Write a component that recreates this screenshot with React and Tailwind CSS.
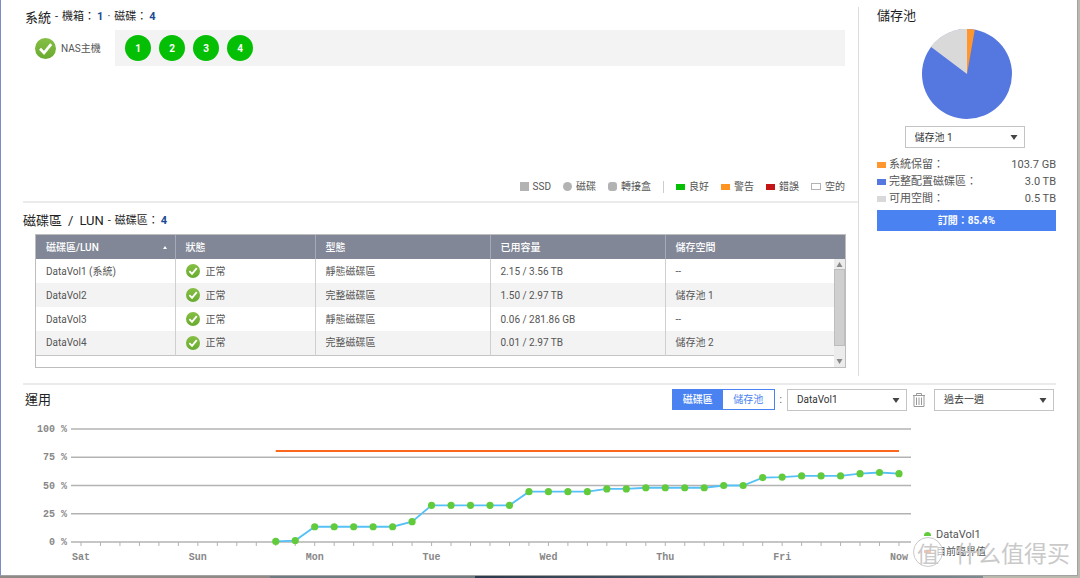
import { Fragment } from 'react'
import clsx from 'clsx'

const volumes = [
  { name: 'DataVol1 (系統)', type: '靜態磁碟區', used: '2.15 / 3.56 TB', pool: '--' },
  { name: 'DataVol2', type: '完整磁碟區', used: '1.50 / 2.97 TB', pool: '儲存池 1' },
  { name: 'DataVol3', type: '靜態磁碟區', used: '0.06 / 281.86 GB', pool: '--' },
  { name: 'DataVol4', type: '完整磁碟區', used: '0.01 / 2.97 TB', pool: '儲存池 2' },
]

const poolUsage = [
  { label: '系統保留', value: '103.7 GB', color: 'bg-[#ff962e]' },
  { label: '完整配置磁碟區', value: '3.0 TB', color: 'bg-[#5577e0]' },
  { label: '可用空間', value: '0.5 TB', color: 'bg-[#d9d9d9]' },
]

const days = ['Sat', 'Sun', 'Mon', 'Tue', 'Wed', 'Thu', 'Fri', 'Now']

// Usage in percent, one sample every four hours
const firstSample = 10
const usage = [
  0.5, 1.3, 13.5, 13.5, 13.5, 13.5, 13.5, 18, 32.5, 32.5, 32.5, 32.5, 32.5, 44.5, 44.5, 44.5, 44.5,
  47, 47, 48, 48, 48, 48, 50, 50, 57, 57.5, 58.5, 58.5, 58.5, 60.5, 61.5, 60.5,
]

function StatusIcon({ className }) {
  return (
    <svg viewBox="0 0 20 20" className={className} aria-hidden="true">
      <defs>
        <linearGradient id="ok" x1="0" y1="0" x2="0" y2="1">
          <stop offset="0" stopColor="#86bf45" />
          <stop offset="1" stopColor="#68ab2e" />
        </linearGradient>
      </defs>
      <circle cx="10" cy="10" r="10" fill="url(#ok)" />
      <path d="M4.8 10.2 L8.6 14.2 L15.4 5.8" fill="none" stroke="#fff" strokeWidth="2.6" />
    </svg>
  )
}

function TrashIcon() {
  return (
    <svg viewBox="0 0 14 16" className="h-4 w-3.5" fill="none" stroke="#999" aria-hidden="true">
      <path d="M1 3.5h12M4.5 3V1.5h5V3M2 3.5v11h10v-11M4.5 5.5v7.5M7 5.5v7.5M9.5 5.5v7.5" />
    </svg>
  )
}

function Dropdown({ label, value }) {
  return (
    <div className="relative w-[120px]">
      <select
        aria-label={label}
        defaultValue={value}
        className="block h-[22px] w-full appearance-none border border-[#c4c4c4] bg-white pl-[9px] text-[10px] text-[#333]"
      >
        <option>{value}</option>
      </select>
      <svg viewBox="0 0 8 5" className="pointer-events-none absolute top-[9px] right-[7px] h-[5px] w-2" aria-hidden="true">
        <path d="M0.5 0h7L4 5z" fill="#444" />
      </svg>
    </div>
  )
}

function Count({ label, value }) {
  return (
    <span className="flex items-center gap-0.5">
      {label}：<b className="text-[#1b4a94]">{value}</b>
    </span>
  )
}

function LegendItem({ marker, children }) {
  return (
    <li className="flex items-center gap-1">
      <span className={marker} />
      {children}
    </li>
  )
}

function SystemSection() {
  return (
    <section className="h-[203px] border-b-2 border-[#ebebeb] pr-[13px]">
      <div className="flex h-full flex-col">
        <h2 className="flex h-[30px] items-center gap-1 pt-[5px] pl-0.5 text-[13px] text-[#222]">
          系統
          <span className="flex gap-1 text-[11px]">
            <span>-</span>
            <Count label="機箱" value="1" />
            <span>·</span>
            <Count label="磁碟" value="4" />
          </span>
        </h2>
        <div className="flex items-center">
          <div className="flex w-[92px] items-center gap-[5px] pl-3 text-[10px]">
            <StatusIcon className="size-[21px]" />
            NAS主機
          </div>
          <div className="flex h-9 flex-1 items-center gap-2 bg-[#f3f3f3] px-[10px]">
            {[1, 2, 3, 4].map((disk) => (
              <button
                key={disk}
                type="button"
                className="size-[26px] rounded-full bg-[#04bf04] text-[10px] font-bold text-white"
              >
                {disk}
              </button>
            ))}
          </div>
        </div>
        <ul className="mt-auto flex items-center justify-end gap-3 pb-[7px] text-[10px]">
          <LegendItem marker="size-[9px] bg-[#b3b3b3]">SSD</LegendItem>
          <LegendItem marker="size-[9px] rounded-full bg-[#b3b3b3]">磁碟</LegendItem>
          <LegendItem marker="size-[9px] rounded-[3px] bg-[#b3b3b3]">轉接盒</LegendItem>
          <li className="h-3 w-px bg-[#ccc]" />
          <LegendItem marker="h-[6px] w-[9px] bg-[#04bf04]">良好</LegendItem>
          <LegendItem marker="h-[6px] w-[9px] bg-[#ff9420]">警告</LegendItem>
          <LegendItem marker="h-[6px] w-[9px] bg-[#c41414]">錯誤</LegendItem>
          <LegendItem marker="h-[7px] w-[10px] border border-[#b3b3b3]">空的</LegendItem>
        </ul>
      </div>
    </section>
  )
}

function VolumeTable() {
  return (
    <div className="relative border border-[#bdbdbd] pb-[11px]">
      <table className="w-full table-fixed border-b border-[#c4c4c4] text-left text-[10px]">
        <colgroup>
          <col className="w-[139px]" />
          <col className="w-[140px]" />
          <col className="w-[175px]" />
          <col className="w-[175px]" />
          <col />
        </colgroup>
        <thead className="bg-[#818796] text-white">
          <tr className="h-6">
            {['磁碟區/LUN', '狀態', '型態', '已用容量', '儲存空間'].map((title, i) => (
              <th
                key={title}
                scope="col"
                className={clsx('px-[10px] font-medium', i < 4 && 'border-r border-[#a5aab6]')}
              >
                <span className="flex items-center justify-between">
                  {title}
                  {i === 0 && (
                    <svg viewBox="0 0 4 3" className="-mr-0.5 h-[3px] w-1" aria-hidden="true">
                      <path d="M0 3h4L2 0z" fill="#fff" />
                    </svg>
                  )}
                </span>
              </th>
            ))}
          </tr>
        </thead>
        <tbody>
          {volumes.map((volume) => (
            <tr key={volume.name} className="h-6 even:bg-[#f3f3f3]">
              <td className="border-r border-[#cfcfcf] px-[10px]">{volume.name}</td>
              <td className="border-r border-[#cfcfcf] px-[10px]">
                <span className="flex items-center gap-[6px]">
                  <StatusIcon className="size-[14px]" />
                  正常
                </span>
              </td>
              <td className="border-r border-[#cfcfcf] px-[10px]">{volume.type}</td>
              <td className="border-r border-[#cfcfcf] px-[10px]">{volume.used}</td>
              <td className="px-[10px]">{volume.pool}</td>
            </tr>
          ))}
        </tbody>
      </table>
      <div className="absolute top-6 right-0 bottom-0 flex w-[11px] flex-col items-center bg-[#ececec]" aria-hidden="true">
        <svg viewBox="0 0 11 10" className="h-[10px] w-[11px]">
          <path d="M2.5 8h6L5.5 3z" fill="#8a8a8a" />
        </svg>
        <div className="h-[77px] w-full border border-[#bdbdbd] bg-[#cfcfcf]" />
        <svg viewBox="0 0 11 10" className="mt-auto h-[10px] w-[11px]">
          <path d="M2.5 2h6L5.5 7z" fill="#8a8a8a" />
        </svg>
      </div>
    </div>
  )
}

function StoragePool() {
  return (
    <aside className="w-[197px] pl-[18px]">
      <h2 className="flex h-[29px] items-center pt-0.5 text-[13px] text-[#222]">儲存池</h2>
      <svg viewBox="-45 -45 90 90" className="mx-auto size-[90px]" role="img" aria-label="儲存池">
        <circle r="45" fill="#5577e0" />
        <path d="M0 0V-45A45 45 0 0 1 7.8 -44.3Z" fill="#ff962e" />
        <path d="M0 0L-36.2 -27.3A45.3 45.3 0 0 1 0 -45.3Z" fill="#d9d9d9" />
      </svg>
      <div className="mt-[7px] flex justify-center pr-1">
        <Dropdown label="儲存池" value="儲存池 1" />
      </div>
      <dl className="mt-2 grid grid-cols-[1fr_auto] text-[11px] leading-[17px]">
        {poolUsage.map((item) => (
          <Fragment key={item.label}>
            <dt className="flex items-center gap-[3px]">
              <span className={clsx('h-[6px] w-[9px]', item.color)} />
              {item.label}：
            </dt>
            <dd className="text-right">{item.value}</dd>
          </Fragment>
        ))}
      </dl>
      <div className="mt-[3px] bg-[#4a82f2] text-center text-[10px] leading-[21px] font-bold text-white">訂閱：85.4%</div>
    </aside>
  )
}

function UsageChart() {
  const x = (tick) => 58 + tick * 19.476
  const y = (percent) => 122 - percent * 1.13
  const points = usage.map((value, i) => [x(firstSample + i), y(value)])

  return (
    <svg viewBox="0 0 888 146" className="min-w-0 flex-1" role="img" aria-label="運用">
      <g stroke="#b3b3b3" strokeWidth="1.5">
        {[100, 75, 50, 25, 0].map((p) => (
          <line key={p} x1="48" x2="888" y1={y(p)} y2={y(p)} />
        ))}
        {Array.from({ length: 43 }, (_, i) => (
          <line key={i} x1={x(i)} x2={x(i)} y1="122" y2="126" strokeWidth="1" />
        ))}
      </g>
      <g className="font-['Liberation_Mono',monospace] text-[10px] font-bold" fill="#888">
        {[100, 75, 50, 25, 0].map((p) => (
          <text key={p} x="44" y={y(p) + 3} textAnchor="end">
            {p} %
          </text>
        ))}
        {days.map((day, i) => (
          <text key={day} x={x(i * 6)} y="140" textAnchor="middle">
            {day}
          </text>
        ))}
      </g>
      <line x1={x(firstSample)} x2={x(42)} y1="31" y2="31" stroke="#fb671e" strokeWidth="2" />
      <polyline points={points.map((p) => p.join(',')).join(' ')} fill="none" stroke="#56c1f6" strokeWidth="1.8" />
      {points.map(([cx, cy]) => (
        <circle key={cx} cx={cx} cy={cy} r="3.6" fill="#62cb3c" />
      ))}
    </svg>
  )
}

export default function App() {
  return (
    <div className="relative flex min-h-screen flex-col overflow-hidden bg-[#b9b9ae] pr-0.5 pb-0.5 font-['Roboto','Noto_Sans_CJK_TC',sans-serif] text-[#555]">
      <main className="flex-1 border-r border-b border-l border-r-[#a2a2a2] border-b-[#a2a2a2] border-l-[#7b8dc6] bg-white pr-[21px] pl-[22px]">
        <div className="flex">
          <div className="min-w-0 flex-1">
            <SystemSection />
            <section className="pr-3 pb-[15px]">
              <h2 className="flex h-[31px] items-center gap-1 pt-[5px] text-[13px] text-[#222]">
                <span className="flex gap-[6px]">
                  磁碟區 <span>/</span> <span>LUN</span>
                </span>
                <span className="flex gap-1 text-[11px]">
                  <span>-</span>
                  <Count label="磁碟區" value="4" />
                </span>
              </h2>
              <div className="pl-3">
                <VolumeTable />
              </div>
            </section>
          </div>
          <div className="mt-[7px] mb-[7px] w-px bg-[#dcdcdc]" />
          <StoragePool />
        </div>

        <section className="border-t-2 border-[#ebebeb]">
          <div className="flex items-center gap-[5px] pt-1 pr-0.5">
            <h2 className="mr-auto pl-0.5 text-[13px] text-[#222]">運用</h2>
            <div className="flex h-[21px] w-[103px] border border-[#4a82f2] text-[10px]">
              <button type="button" className="flex-1 bg-[#4a82f2] font-medium text-white">
                磁碟區
              </button>
              <button type="button" className="flex-1 text-[#4a82f2]">
                儲存池
              </button>
            </div>
            <span className="text-[10px] leading-4">:</span>
            <Dropdown label="磁碟區" value="DataVol1" />
            <button type="button" aria-label="刪除" className="mr-[3px]">
              <TrashIcon />
            </button>
            <Dropdown label="期間" value="過去一週" />
          </div>
          <div className="mt-[9px] flex items-end gap-[13px]">
            <UsageChart />
            <ul className="w-[132px] pb-[6px] text-[11px] leading-[17px]">
              <li className="flex items-center gap-[5px]">
                <span className="h-1 w-[7px] rounded-t-full bg-[#62cb3c]" />
                DataVol1
              </li>
              <li className="flex items-center gap-[5px] text-[10px]">
                <span className="h-[3px] w-[7px] bg-[#fb671e]" />
                目前臨界值
              </li>
            </ul>
          </div>
        </section>
      </main>

      <div className="absolute right-[10px] bottom-[11px] flex items-center gap-3 font-['Noto_Sans_CJK_SC',sans-serif] text-[#c9c9c9]">
        <span className="flex size-[30px] items-center justify-center rounded-full border border-[#c9c9c9] bg-white/60 text-[22px] leading-none">
          值
        </span>
        <span className="text-[23px] leading-[30px]">什么值得买</span>
      </div>
      <div className="absolute bottom-0 left-0 flex h-0.5 w-full">
        <div className="w-[25%] bg-[#8f8a86]" />
        <div className="w-[19%] bg-[#6f7b80]" />
        <div className="flex-1 bg-linear-to-r from-[#2b3a4c] to-[#7d8c90]" />
        <div className="w-[9%] bg-[#b9b9ae]" />
      </div>
    </div>
  )
}
